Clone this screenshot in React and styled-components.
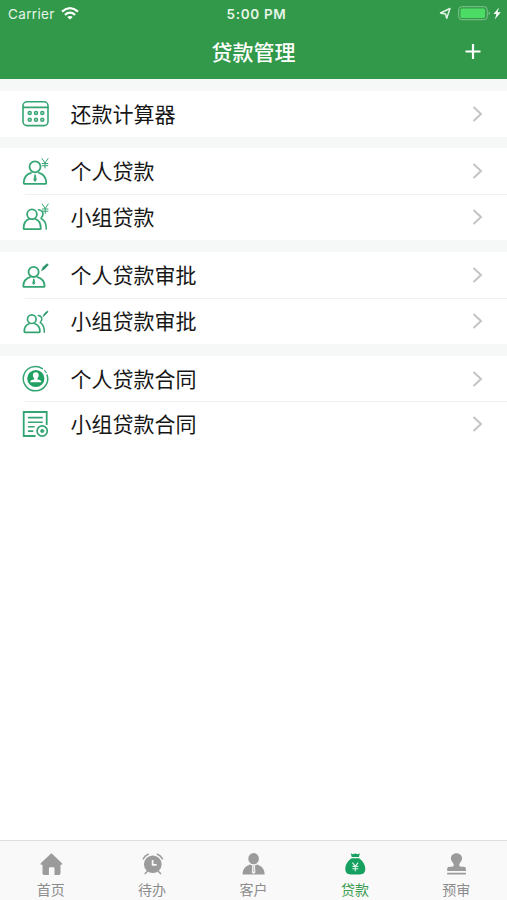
import React from "react";
import styled, { createGlobalStyle } from "styled-components";

const GlobalStyle = createGlobalStyle`
  * {
    box-sizing: border-box;
  }
  body {
    margin: 0;
    background: #fff;
    font-family: Inter, "Noto Sans CJK SC", sans-serif;
  }
`;

const Screen = styled.div`
  height: 100vh;
  display: flex;
  flex-direction: column;
  overflow: hidden;
`;

const Header = styled.header`
  height: 79px;
  flex: none;
  background: #32994a;
  color: #fff;
`;

const StatusBar = styled.div`
  height: 27px;
  display: grid;
  grid-template-columns: 1fr auto 1fr;
  align-items: center;
  padding: 0 5px 0 8px;
  color: #e6f6e8;
  font-size: 13.5px;
`;

const Carrier = styled.div`
  display: flex;
  align-items: center;
  gap: 6px;
  letter-spacing: 0.35px;
`;

const Clock = styled.div`
  padding-left: 3px;
  font-size: 13.5px;
  font-weight: 600;
  letter-spacing: 0.7px;
`;

const Indicators = styled.div`
  display: flex;
  align-items: center;
  justify-content: flex-end;
`;

const TitleBar = styled.div`
  height: 50px;
  display: grid;
  grid-template-columns: 1fr auto 1fr;
  align-items: center;
  padding: 0 26px;
`;

const Title = styled.h1`
  grid-column: 2;
  margin: 0;
  padding-top: 2px;
  font-size: 21px;
  line-height: 30px;
  font-weight: 500;
`;

const AddButton = styled.button`
  justify-self: end;
  display: flex;
  padding: 0;
  border: 0;
  background: none;
  color: inherit;
`;

const Content = styled.main`
  flex: 1;
`;

const Group = styled.section`
  border-top: ${({ $gap }) => $gap}px solid #f6f7f7;
`;

const Row = styled.div`
  height: ${({ $height }) => $height || 46}px;
  display: flex;
  align-items: center;
  padding: 0 23px 0 20px;
  background: linear-gradient(#f0f1f1, #f0f1f1) 25px 0 / 100%
    ${({ $divided }) => ($divided ? 1 : 0)}px no-repeat;
`;

const RowIcon = styled.svg`
  width: 30px;
  height: 30px;
  flex: none;
  fill: none;
  stroke: #35a574;
  stroke-width: 1.8;
  stroke-linecap: round;
  stroke-linejoin: round;
`;

const RowLabel = styled.span`
  flex: 1;
  margin-left: 20.5px;
  padding-top: 2px;
  color: #161616;
  font-size: 21px;
  line-height: 30px;
`;

const Chevron = styled.svg`
  width: 12px;
  height: 18px;
  fill: none;
  stroke: #c4c4c6;
  stroke-width: 2;
`;

const TabBar = styled.nav`
  height: 60px;
  flex: none;
  display: grid;
  grid-template-columns: repeat(5, 1fr);
  border-top: 1px solid #dedede;
  background: #f9f9f9;
`;

const Tab = styled.div`
  display: flex;
  flex-direction: column;
  align-items: center;
  padding-top: 11px;
  color: ${({ $active }) => ($active ? "#3a9d51" : "#8c8c8c")};
  font-size: 14px;
  line-height: 20px;
`;

const TabIcon = styled.svg`
  width: 24px;
  height: 24px;
  margin-bottom: 4px;
  fill: ${({ $active }) => ($active ? "#17a160" : "#9b9b9b")};
`;

const Yen = ({ x, y }) => (
  <path
    d={`M${x - 3} ${y - 5}l3 4.5 3-4.5M${x} ${y - 0.5}v5M${x - 2.8} ${y}h5.6M${x - 2.8} ${y + 2.2}h5.6`}
    strokeWidth="1"
  />
);

const CalculatorIcon = () => (
  <RowIcon viewBox="0 0 30 30">
    <rect x="3" y="2.8" width="25" height="23.8" rx="4" strokeWidth="1.6" />
    <path d="M3 8.4h25" strokeWidth="1.6" />
    {[14, 20.8].map((y) =>
      [9.7, 16, 22.3].map((x) => (
        <circle key={`${x}-${y}`} cx={x} cy={y} r="1.6" fill="#9bd2b9" strokeWidth="1.3" />
      ))
    )}
  </RowIcon>
);

const PersonYenIcon = () => (
  <RowIcon viewBox="0 0 30 30">
    <circle cx="15" cy="10.8" r="5.5" />
    <path d="M11 16.8c-4.6 1.4-7.2 4.8-7.3 10.2q0 .8.8.8h21q.8 0 .8-.8c-.1-5.4-2.8-8.8-7.3-10.2" />
    <path d="M15 19l-1.1 5 1.1 1.4 1.1-1.4z" fill="#35a574" strokeWidth="1" />
    <Yen x={25} y={7.5} />
  </RowIcon>
);

const GroupYenIcon = () => (
  <RowIcon viewBox="0 0 30 30">
    <circle cx="12" cy="12.3" r="4.9" />
    <path d="M8.8 17.2c-3.5 1.2-5.2 4.4-5.2 9.4q0 .6.6.6h16q.6 0 .6-.6c0-5-1.7-8.2-5.2-9.4" />
    <path d="M18.5 7.8c3.5.3 4.9 2.7 4.4 5.2-.3 1.4-1.8 2.2-1.8 3.4 3.8 1.7 5.2 5 5.2 10.6" strokeWidth="1.6" />
    <Yen x={25.2} y={7} />
  </RowIcon>
);

const PersonApproveIcon = () => (
  <RowIcon viewBox="0 0 30 30">
    <circle cx="13.6" cy="11.9" r="5.1" />
    <path d="M10 17.2c-4.2 1.2-6.6 4.4-6.7 9q0 .7.7.7h19.9q.7 0 .7-.7c-.1-4.6-2.9-7.8-7-9" />
    <path d="M13.7 19.2l-.9 4 .9 1.2.9-1.2z" fill="#35a574" strokeWidth="1" />
    <path d="M21.8 10.2l1.2-2.8 4-3.6 1.3 1-3.6 3.9z" fill="#248f63" stroke="#248f63" strokeWidth=".8" />
  </RowIcon>
);

const GroupApproveIcon = () => (
  <RowIcon viewBox="0 0 30 30">
    <circle cx="11.8" cy="13.2" r="4.3" strokeWidth="1.7" />
    <path d="M9 17.8c-3.2 1-4.7 3.9-4.7 7.9q0 .6.6.6h14.4q.6 0 .6-.6c0-4-1.8-6.9-5-7.9" strokeWidth="1.7" />
    <path d="M18.2 9.4c2.8.3 4 2.3 3.5 4.5-.3 1.3-1.5 1.8-1.5 2.8 2.9 1.5 4.1 4.6 4.1 9.5" strokeWidth="1.5" />
    <path d="M23 10.4l1.2-2.4 3-3.1.9.8-3 3.3z" fill="#248f63" strokeWidth=".7" />
  </RowIcon>
);

const PersonContractIcon = () => (
  <RowIcon viewBox="0 0 30 30">
    <path d="M22.4 4.6a12.2 12.2 0 1 0 4.7 6.3" strokeWidth="1.5" />
    <path d="M24.6 6.5l1.5 2" strokeWidth="1.2" />
    <circle cx="15.8" cy="14.5" r="8.6" fill="#20a062" stroke="none" />
    <path
      d="M15.8 8.3c-1.9 0-2.9 1.3-2.9 3 0 1.2.5 2.2 1.2 2.9v1.3c-2.3.4-3.8 1-3.9 2.7h11.2c-.1-1.7-1.6-2.3-3.9-2.7v-1.3c.7-.7 1.2-1.7 1.2-2.9 0-1.7-1-3-2.9-3z"
      fill="#fff"
      stroke="none"
    />
  </RowIcon>
);

const GroupContractIcon = () => (
  <RowIcon viewBox="0 0 30 30">
    <path d="M15.5 27H3.7V3h23v13" strokeLinecap="butt" strokeLinejoin="miter" />
    <path d="M8.5 8.6h13.7M8.5 13.2h13.7M8.5 17.7h5.6M8.5 22.1h4.3" strokeWidth="1.6" />
    <circle cx="22.2" cy="22" r="5.1" strokeWidth="1.7" />
    <circle cx="22.2" cy="22" r="1.7" fill="#35a574" strokeWidth=".6" />
  </RowIcon>
);

const HomeIcon = () => (
  <TabIcon viewBox="0 0 24 24">
    <path d="M11.8 1.7q.6-.5 1.2 0L23 11.3q.8 1.5-.8 1.5h-.7v8.4q0 1.700-1.700 1.700h-4.300v-6.500q0-1.200-1.200-1.200h-3.200q-1.200 0-1.200 1.200v6.500H5.200q-1.700 0-1.700-1.700v-8.400h-1q-1.600 0-.8-1.500z" />
  </TabIcon>
);

const AlarmIcon = () => (
  <TabIcon viewBox="0 0 24 24">
    <circle cx="12.8" cy="12.3" r="8.8" />
    <path
      d="M3.2 6.9q1.5-3.3 5-4.6M22.4 6.9q-1.5-3.3-5-4.6M7.4 19.2l-2.2 2.4M18.3 19.2l2.2 2.4"
      fill="none"
      stroke="#9b9b9b"
      strokeWidth="1.5"
      strokeLinecap="round"
    />
    <path d="M12.6 8v4.8h4" fill="none" stroke="#f9f9f9" strokeWidth="1.7" />
  </TabIcon>
);

const CustomerIcon = () => (
  <TabIcon viewBox="0 0 24 24">
    <ellipse cx="12.6" cy="6.7" rx="5.3" ry="5.6" />
    <path d="M9 12.5C4.5 14 1.7 17 1.5 22.5h22.2C23.500 17 20.700 14 16.200 12.500l-2.200 1 .4 7-1.800 1.500-1.800-1.500.4-7z" />
    <path d="M11.8 13.6h1.6l-.3 1.5.5 4.2-1 1.3-1-1.300.500-4.200z" opacity=".5" />
  </TabIcon>
);

const MoneyBagIcon = () => (
  <TabIcon viewBox="0 0 24 24" $active>
    <path d="M7.8 1.3l2.1 1 2.4-.9 2.4.9 2.1-1-.9 3.800H8.700zM8.500 6.200h7.600c3.300 2.200 6.200 6.300 6.200 10.600 0 3.800-2 5.700-5.500 5.700H7.800c-3.500 0-5.500-1.900-5.500-5.700 0-4.300 2.900-8.400 6.200-10.600z" />
    <path
      d="M9.4 10.7l2.9 3.5 2.9-3.5M12.3 14.2v5M9.4 14.4h5.8M9.4 16.7h5.8"
      fill="none"
      stroke="#dff5e9"
      strokeWidth="1.1"
    />
  </TabIcon>
);

const StampIcon = () => (
  <TabIcon viewBox="0 0 24 24">
    <path d="M12.5 1.3c3.3 0 5.6 2.3 5.6 5.3 0 2.8-2.9 4.3-2.9 6.5 0 1.300.8 1.700 2 1.700h2.700q2 0 2 2v2.300H3.200v-2.300q0-2 2-2h2.600c1.200 0 2-.4 2-1.700 0-2.200-2.900-3.700-2.900-6.500 0-3 2.300-5.300 5.600-5.300zM3.200 20.700h18.700v1.800H3.200z" />
  </TabIcon>
);

const groups = [
  { gap: 12, rows: [{ label: "还款计算器", icon: CalculatorIcon }] },
  {
    gap: 11,
    rows: [
      { label: "个人贷款", icon: PersonYenIcon },
      { label: "小组贷款", icon: GroupYenIcon },
    ],
  },
  {
    gap: 12,
    rows: [
      { label: "个人贷款审批", icon: PersonApproveIcon },
      { label: "小组贷款审批", icon: GroupApproveIcon },
    ],
  },
  {
    gap: 12,
    rows: [
      { label: "个人贷款合同", icon: PersonContractIcon, height: 45 },
      { label: "小组贷款合同", icon: GroupContractIcon },
    ],
  },
];

const tabs = [
  { label: "首页", icon: HomeIcon },
  { label: "待办", icon: AlarmIcon },
  { label: "客户", icon: CustomerIcon },
  { label: "贷款", icon: MoneyBagIcon, active: true },
  { label: "预审", icon: StampIcon },
];

const App = () => (
  <>
    <GlobalStyle />
    <Screen>
      <Header>
        <StatusBar>
          <Carrier>
            Carrier
            <svg width="18" height="13" viewBox="0 0 18 13" fill="none" stroke="#fff" strokeWidth="2.2">
              <path d="M1 4.6q8-6.8 16 0M3.9 7.8q5.1-4.2 10.2 0" />
              <path d="M9 12.6L6.2 9.9q2.8-2 5.6 0z" fill="#fff" stroke="none" />
            </svg>
          </Carrier>
          <Clock>5:00 PM</Clock>
          <Indicators>
            <svg width="64" height="16" viewBox="0 0 64 16" fill="none">
              <path d="M2.5 7L12 2.5 8.7 12.3 7.6 8z" stroke="#e6f6e8" strokeWidth="1.4" strokeLinejoin="round" />
              <rect x="20.7" y=".7" width="28.5" height="13" rx="3" stroke="#80c58d" />
              <rect x="22.5" y="2.5" width="24.5" height="9.5" rx="1.5" fill="#4cdb64" />
              <path d="M50.6 5.2q2.8 2 0 4z" fill="#80c58d" />
              <path d="M61 1.5l-5.5 6.6h3L56.8 13.5l6-7.2h-3.3z" fill="#fff" />
            </svg>
          </Indicators>
        </StatusBar>
        <TitleBar>
          <Title>贷款管理</Title>
          <AddButton aria-label="add">
            <svg width="16" height="16" viewBox="0 0 16 16" stroke="currentColor" strokeWidth="2.2">
              <path d="M8 0v15M.5 7.5h15" />
            </svg>
          </AddButton>
        </TitleBar>
      </Header>
      <Content>
        {groups.map(({ gap, rows }) => (
          <Group key={rows[0].label} $gap={gap}>
            {rows.map(({ label, icon: Icon, height }, i) => (
              <Row key={label} $divided={i > 0} $height={height}>
                <Icon />
                <RowLabel>{label}</RowLabel>
                <Chevron viewBox="0 0 12 18">
                  <path d="M1.5 2l7.5 7-7.5 7" />
                </Chevron>
              </Row>
            ))}
          </Group>
        ))}
      </Content>
      <TabBar>
        {tabs.map(({ label, icon: Icon, active }) => (
          <Tab key={label} $active={active}>
            <Icon />
            {label}
          </Tab>
        ))}
      </TabBar>
    </Screen>
  </>
);

export default App;
